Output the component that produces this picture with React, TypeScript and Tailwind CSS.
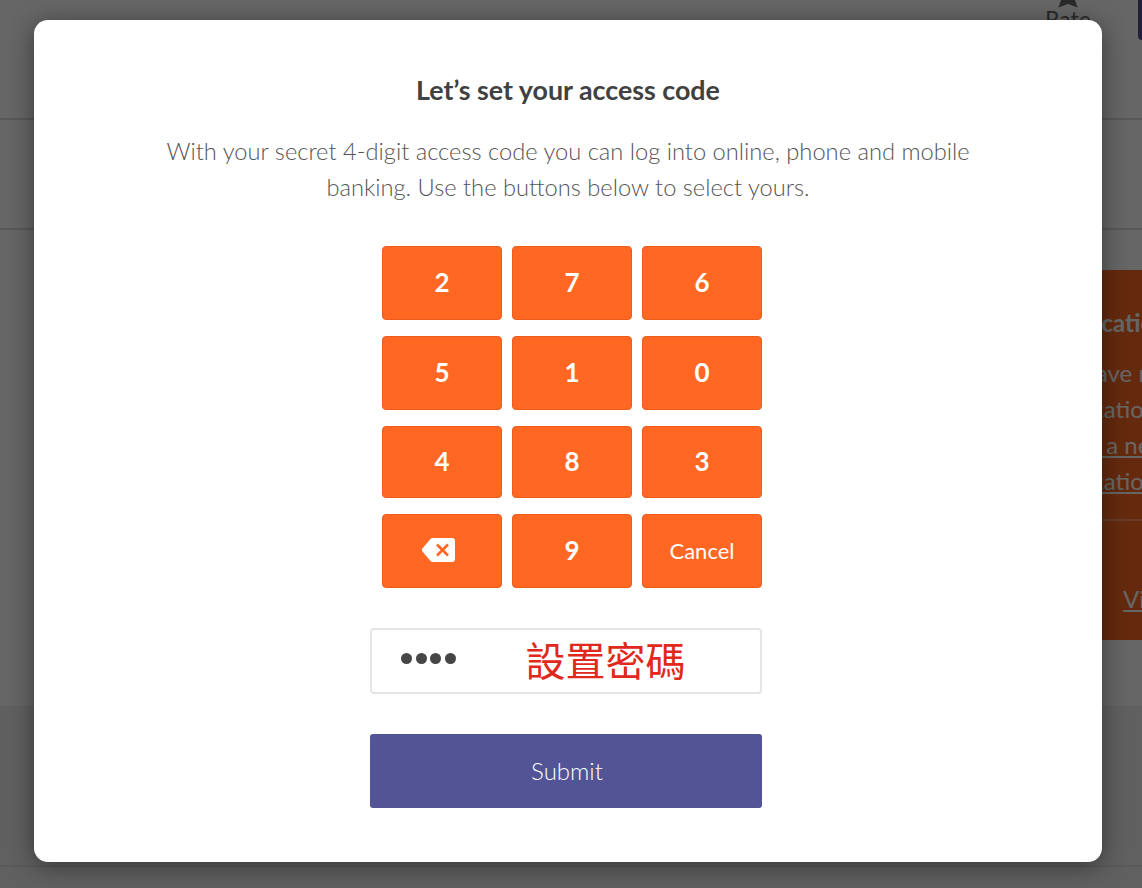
const FONT = "font-['Lato','Noto_Sans',sans-serif]";

const KEY_ROWS = [
  { height: 'h-[74px]', keys: ['2', '7', '6'] },
  { height: 'h-[74px]', keys: ['5', '1', '0'] },
  { height: 'h-[72px]', keys: ['4', '8', '3'] },
];

function BackspaceIcon() {
  return (
    <svg width="33" height="24" viewBox="0 0 33 24" className="mr-[7px]" aria-hidden="true">
      <path
        d="M10.5 0H30a3 3 0 0 1 3 3v18a3 3 0 0 1-3 3H10.5a2.5 2.5 0 0 1-1.8-.8L.4 13.400a2 2 0 0 1 0-2.800L8.700.8A2.500 2.500 0 0 1 10.500 0Z"
        fill="#fff"
      />
      <path d="M15 6.500 26 17.500M26 6.500 15 17.500" stroke="#ff6722" strokeWidth="2.600" fill="none" />
    </svg>
  );
}

function Key({ children, light }: { children: React.ReactNode; light?: boolean }) {
  return (
    <button
      type="button"
      className={`flex h-full w-[120px] items-center justify-center rounded-[4px] border border-[#ea5c1c] bg-[#ff6722] pb-[2px] text-white ${
        light ? 'text-[22px] font-normal' : 'text-[26px] font-bold'
      }`}
    >
      {children}
    </button>
  );
}

function Background() {
  return (
    <div className={`flex h-[888px] w-[1142px] flex-col overflow-hidden bg-white ${FONT}`}>
      <header className="flex h-[120px] shrink-0 justify-end border-b-2 border-[#dcdcdc]">
        <div className="mr-[48px] flex w-[44px] flex-col items-center">
          <svg width="24" height="8" viewBox="0 0 24 8" aria-hidden="true">
            <path d="M5 0h14l2.500 7.500L12 4 2.500 7.500Z" fill="#696969" />
          </svg>
          <span className="text-[23px] leading-[23px] text-[#696969]">Rate</span>
        </div>
        <div className="h-[40px] w-[4px] rounded-bl-[4px] bg-[#525199]" />
      </header>
      <div className="h-[110px] shrink-0 border-b-2 border-[#dcdcdc]" />
      <main className="flex h-[476px] shrink-0 pt-[40px]">
        <div className="w-[1000px] shrink-0" />
        <aside className="h-[370px] w-[142px] overflow-hidden whitespace-nowrap bg-[#fd6a23] pl-[37px] text-white">
          <h2 className="ml-[3px] mt-[37px] text-[24px] font-bold leading-[32px]">Notification</h2>
          <div className="mt-[16px] text-[24px] leading-[36px]">
            <p>You have new</p>
            <p>notifications</p>
            <p className="-ml-[4px] underline">Set up a new</p>
            <p className="underline">notification</p>
          </div>
          <div className="-ml-[37px] mt-[20px] h-[2px] bg-[#ff9a66]" />
          <a className="ml-[86px] mt-[60px] block text-[24px] leading-[36px] underline">View</a>
        </aside>
      </main>
      <footer className="h-[182px] shrink-0 bg-[#f0f0f0]">
        <div className="mt-[159px] h-[2px] bg-[#e0e0e0]" />
      </footer>
    </div>
  );
}

export default function App() {
  return (
    <div className="relative h-[888px] w-[1142px] overflow-hidden">
      <Background />
      <div className={`absolute inset-0 flex items-start bg-black/60 pl-[34px] pt-[20px] ${FONT}`}>
        <section className="flex h-[842px] w-[1068px] flex-col items-center rounded-[14px] bg-white pt-[53px] shadow-[0_4px_24px_rgba(0,0,0,0.45)]">
          <h1 className="text-[26.8px] font-bold leading-[34px] text-[#414141]">Let’s set your access code</h1>
          <p className="mt-[26px] w-[840px] text-center text-[23.7px] font-light leading-[36px] text-[#555555]">
            With your secret 4-digit access code you can log into online, phone and mobile banking. Use the buttons
            below to select yours.
          </p>

          <div className="mr-[4px] mt-[41px] flex w-[392px] flex-col items-end gap-[16px]">
            <div className="flex w-[380px] flex-col gap-[16px]">
              {KEY_ROWS.map((row) => (
                <div key={row.keys.join('')} className={`flex gap-[10px] ${row.height}`}>
                  {row.keys.map((key) => (
                    <Key key={key}>{key}</Key>
                  ))}
                </div>
              ))}
              <div className="flex h-[74px] gap-[10px]">
                <Key>
                  <BackspaceIcon />
                </Key>
                <Key>9</Key>
                <Key light>Cancel</Key>
              </div>
            </div>
          </div>

          <div className="mr-[4px] mt-[40px] flex h-[66px] w-[392px] items-center rounded-[4px] border-2 border-[#e5e5e5] pl-[29px]">
            <div className="mb-[6px] flex gap-[3.5px]">
              {[0, 1, 2, 3].map((dot) => (
                <span key={dot} className="h-[11px] w-[11px] rounded-full bg-[#464646]" />
              ))}
            </div>
            <span className="mb-[4px] ml-[70px] font-['Noto_Sans_CJK_TC',sans-serif] text-[40px] leading-none text-[#e0281c]">
              設置密碼
            </span>
          </div>

          <button
            type="button"
            className="mr-[4px] mt-[40px] h-[74px] w-[392px] rounded-[3px] bg-[#535496] pl-[2px] text-[24px] font-light text-white"
          >
            Submit
          </button>
        </section>
      </div>
    </div>
  );
}
